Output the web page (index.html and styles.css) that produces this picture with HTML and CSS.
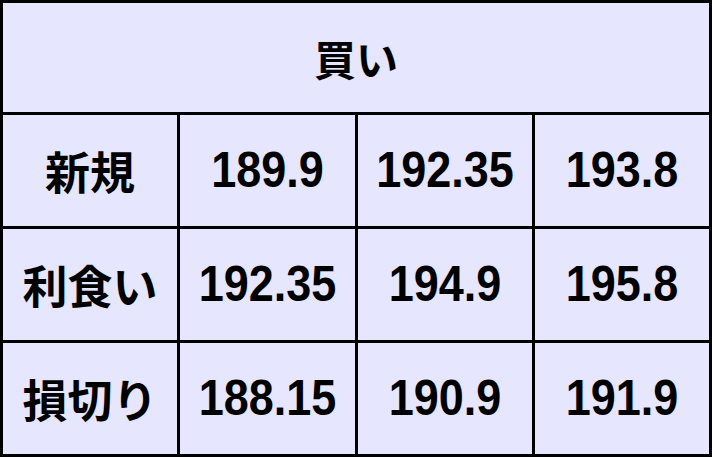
FILE: index.html
```html
<!DOCTYPE html>
<html lang="ja">
<head>
<meta charset="utf-8">
<link rel="stylesheet" href="styles.css">
</head>
<body>
<div class="grid">
  <div class="cell head">買い</div>
  <div class="cell label">新規</div>
  <div class="cell num"><span class="t">189.9</span></div>
  <div class="cell num"><span class="t">192.35</span></div>
  <div class="cell num"><span class="t">193.8</span></div>
  <div class="cell label">利食い</div>
  <div class="cell num"><span class="t">192.35</span></div>
  <div class="cell num"><span class="t">194.9</span></div>
  <div class="cell num"><span class="t">195.8</span></div>
  <div class="cell label">損切り</div>
  <div class="cell num"><span class="t">188.15</span></div>
  <div class="cell num"><span class="t">190.9</span></div>
  <div class="cell num"><span class="t">191.9</span></div>
</div>
</body>
</html>
```
FILE: styles.css
```css
html, body {
  margin: 0;
  padding: 0;
  background: #e6e6fe;
}
.grid {
  width: 712px;
  height: 457px;
  box-sizing: border-box;
  background: #000;
  padding: 3px;
  display: grid;
  gap: 3px;
  grid-template-columns: 174px 175px 174px 174px;
  grid-template-rows: 109px 111px 111px 111px;
}
.cell {
  background: #e6e6fe;
  display: flex;
  align-items: center;
  justify-content: center;
  color: #000;
}
.head {
  grid-column: 1 / 5;
  font-family: "Noto Sans CJK JP", sans-serif;
  font-size: 42px;
  font-weight: 600;
}
.label {
  font-family: "Noto Sans CJK JP", sans-serif;
  font-size: 45px;
  font-weight: 600;
}
.num {
  font-family: "Liberation Sans", Arial, sans-serif;
  font-size: 45px;
  font-weight: bold;
}
.t {
  display: inline-block;
  transform: scaleY(1.1);
}
```
